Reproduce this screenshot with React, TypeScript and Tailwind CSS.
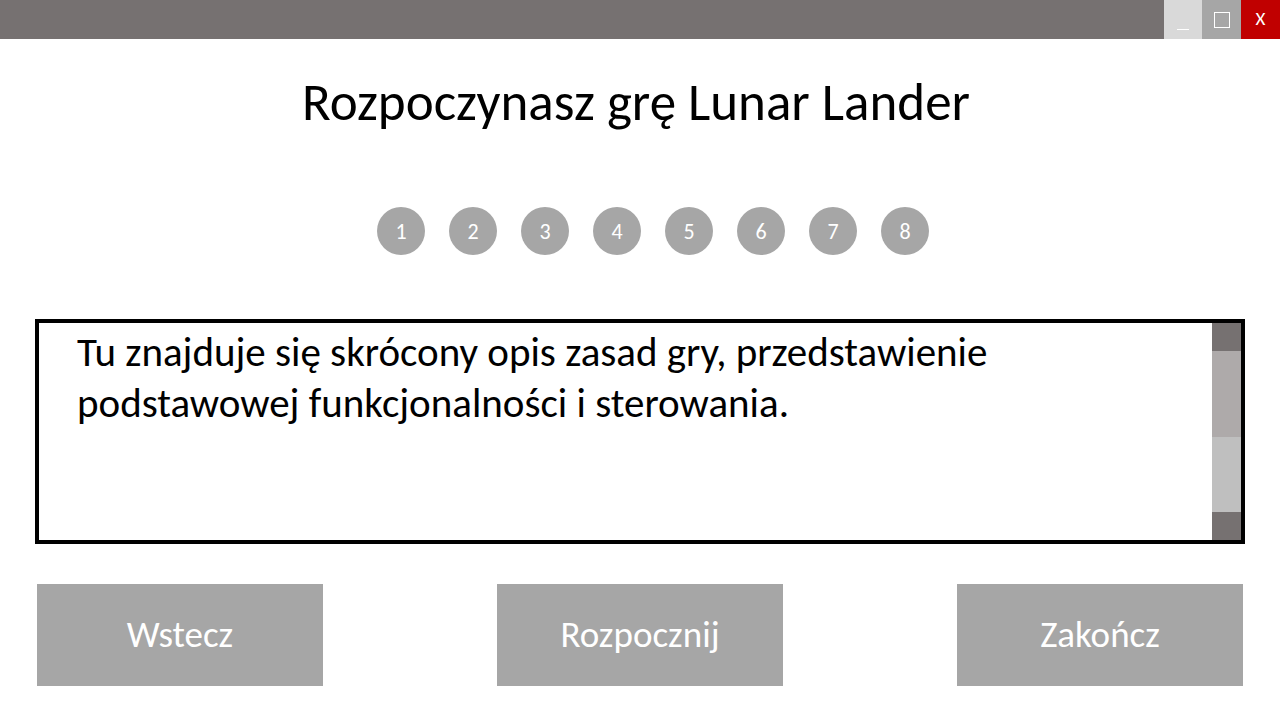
import React from "react";

export default function App() {
  const steps = [1, 2, 3, 4, 5, 6, 7, 8];
  const buttons = ["Wstecz", "Rozpocznij", "Zakończ"];

  return (
    <div className="w-[1280px] h-[720px] bg-white flex flex-col font-['Carlito','Lato',sans-serif] overflow-hidden">
      {/* TITLE BAR */}
      <div className="h-[39px] bg-[#767171] flex justify-end shrink-0">
        <div className="w-[38px] bg-[#d9d9d9] flex items-end justify-center pb-[9px]">
          <div className="w-[12px] h-[1px] bg-white" />
        </div>
        <div className="w-[39px] bg-[#a6a6a6] flex items-center justify-center">
          <div className="w-[16px] h-[16px] border border-white" />
        </div>
        <div className="w-[39px] bg-[#c00000] flex items-center justify-center text-white text-[19px]">
          X
        </div>
      </div>

      {/* HEADER */}
      <h1 className="mt-[33px] text-center text-[53px] leading-[60px] text-black pr-[8px]">
        Rozpoczynasz grę Lunar Lander
      </h1>

      {/* STEPS */}
      <div className="mt-[75px] flex justify-center gap-[24px] pl-[26px]">
        {steps.map((n) => (
          <div
            key={n}
            className="w-[48px] h-[48px] rounded-full bg-[#a6a6a6] flex items-center justify-center text-white text-[22px]"
          >
            {n}
          </div>
        ))}
      </div>

      {/* DESCRIPTION */}
      <div className="mt-[64px] mx-[35px] h-[225px] border-4 border-black flex">
        <div className="flex-1 pl-[38px] pt-[4px] text-[41px] leading-[51px] text-black">
          Tu znajduje się skrócony opis zasad gry, przedstawienie
          <br />
          podstawowej funkcjonalności i sterowania.
        </div>
        <div className="w-[29px] flex flex-col">
          <div className="h-[28px] bg-[#767171]" />
          <div className="h-[86px] bg-[#aeaaaa]" />
          <div className="flex-1 bg-[#bfbfbf]" />
          <div className="h-[28px] bg-[#767171]" />
        </div>
      </div>

      {/* ACTIONS */}
      <div className="mt-[40px] mx-[37px] flex justify-between">
        {buttons.map((b) => (
          <div
            key={b}
            className="w-[286px] h-[102px] bg-[#a6a6a6] flex items-center justify-center text-white text-[37px]"
          >
            {b}
          </div>
        ))}
      </div>
    </div>
  );
}
